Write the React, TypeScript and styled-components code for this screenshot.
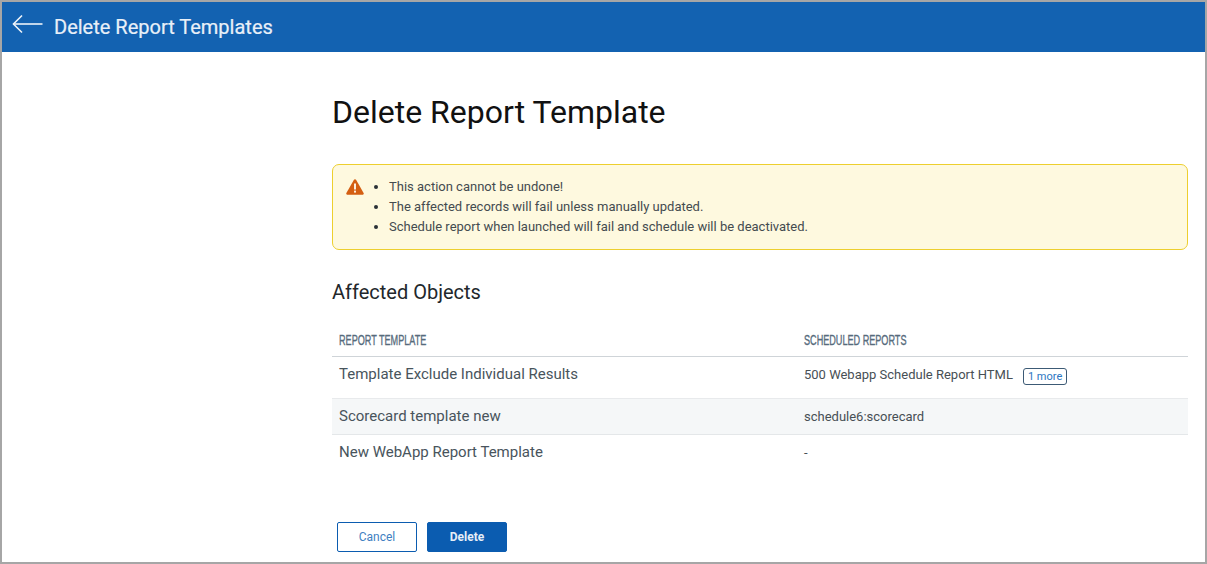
import React from "react";
import styled, { createGlobalStyle } from "styled-components";

const Global = createGlobalStyle`
  html, body { margin: 0; padding: 0; background: #fff; }
  body { font-family: Roboto, "Liberation Sans", sans-serif; overflow: hidden; }
`;
const Frame = styled.div`
  box-sizing: border-box;
  width: 1207px;
  height: 564px;
  border: 2px solid #a6a6a6;
  overflow: hidden;
  display: flex;
  flex-direction: column;
`;
const TopBar = styled.header`
  height: 50px;
  flex: none;
  background: #1362b1;
  display: flex;
  align-items: center;
  padding-left: 10px;
  gap: 11px;
  color: #e9f0f8;
`;
const BackIcon = styled.svg`
  width: 31px;
  height: 20px;
  margin-top: -6px;
`;
const BarTitle = styled.h1`
  margin: 0;
  font-size: 20px;
  font-weight: 400;
  line-height: 50px;
  -webkit-text-stroke: 0.2px #e9f0f8;
`;
const Main = styled.main`
  flex: 1;
  padding: 0 17px 0 330px;
  display: flex;
  flex-direction: column;
`;
const Title = styled.h2`
  margin: 41px 0 0;
  font-size: 32px;
  font-weight: 400;
  line-height: 38px;
  color: #111;
`;
const Alert = styled.div`
  box-sizing: border-box;
  margin-top: 33px;
  height: 86px;
  border: 1px solid #edcf2e;
  border-radius: 7px;
  background: #fef9df;
  padding: 12px 0 0 13px;
  display: flex;
`;
const WarnIcon = styled.svg`
  width: 18px;
  height: 16px;
  flex: none;
  margin-top: 2px;
`;
const AlertList = styled.ul`
  margin: 0;
  padding: 0 0 0 25px;
  font-size: 13px;
  line-height: 20px;
  color: #444b4f;
  li::marker { color: #2a3137; }
`;
const Subtitle = styled.h3`
  margin: 29px 0 0;
  font-size: 20px;
  font-weight: 400;
  line-height: 26px;
  color: #22272b;
`;
const Table = styled.div`
  margin-top: 19px;
  display: flex;
  flex-direction: column;
`;
const Row = styled.div<{ $h: number; $shade?: boolean; $line: string }>`
  box-sizing: border-box;
  height: ${(p) => p.$h}px;
  display: grid;
  grid-template-columns: 465px 1fr;
  padding-left: 7px;
  background: ${(p) => (p.$shade ? "#f5f7f8" : "#fff")};
  border-bottom: 1px solid ${(p) => p.$line};
`;
const HeadCell = styled.div`
  font-family: "Liberation Sans", sans-serif;
  font-size: 14px;
  line-height: 32px;
  color: #566b7c;
  text-transform: uppercase;
  transform: scaleX(0.65);
  transform-origin: left center;
  white-space: nowrap;
  -webkit-text-stroke: 0.35px #566b7c;
`;
const NameCell = styled.div<{ $top: number }>`
  font-size: 15px;
  line-height: 18px;
  padding-top: ${(p) => p.$top}px;
  color: #48545c;
`;
const ValueCell = styled.div<{ $top: number }>`
  font-size: 13px;
  line-height: 18px;
  padding-top: ${(p) => p.$top}px;
  color: #474f55;
  display: flex;
  align-items: flex-start;
`;
const MoreTag = styled.span`
  box-sizing: border-box;
  height: 17px;
  margin: 2px 0 0 10px;
  padding: 0 4px;
  border: 1px solid #3c5a75;
  border-radius: 3px;
  font-size: 11px;
  line-height: 15px;
  color: #2b76c2;
`;
const Actions = styled.div`
  margin: 51px 0 0 5px;
  display: flex;
  gap: 10px;
`;
const Button = styled.button<{ $primary?: boolean }>`
  box-sizing: border-box;
  width: 80px;
  height: 30px;
  padding: 0;
  border: 1px solid #0b5cb0;
  border-radius: 2px;
  background: ${(p) => (p.$primary ? "#0b5cb0" : "#fff")};
  color: ${(p) => (p.$primary ? "#e6eef7" : "#3f7fc2")};
  font-family: Roboto, sans-serif;
  font-size: 12px;
  font-weight: ${(p) => (p.$primary ? 700 : 400)};
`;

const rows = [
  { name: "Template Exclude Individual Results", value: "500 Webapp Schedule Report HTML", h: 42, more: true, line: "#e8eaec" },
  { name: "Scorecard template new", value: "schedule6:scorecard", h: 36, shade: true, line: "#e4e7e9" },
  { name: "New WebApp Report Template", value: "-", h: 36, line: "transparent" },
];

export default function App() {
  return (
    <Frame>
      <Global />
      <TopBar>
        <BackIcon viewBox="0 0 31 20" fill="none" stroke="#eef3f9" strokeWidth="1.6">
          <path d="M1.5 10H30.5" />
          <path d="M10 1.5L1.5 10L10 18.5" />
        </BackIcon>
        <BarTitle>Delete Report Templates</BarTitle>
      </TopBar>
      <Main>
        <Title>Delete Report Template</Title>
        <Alert>
          <WarnIcon viewBox="0 0 18 16">
            <path d="M9 0.3c.5 0 .9.3 1.2.8l7.4 12.8c.5.9-.1 1.9-1.1 1.9H1.5c-1 0-1.6-1-1.1-1.9L7.8 1.1C8.1.6 8.5.3 9 .3z" fill="#d45f12" />
            <rect x="8" y="4.5" width="2" height="6" fill="#fbeedd" />
            <rect x="8" y="11.6" width="2" height="2" fill="#fbeedd" />
          </WarnIcon>
          <AlertList>
            <li>This action cannot be undone!</li>
            <li>The affected records will fail unless manually updated.</li>
            <li>Schedule report when launched will fail and schedule will be deactivated.</li>
          </AlertList>
        </Alert>
        <Subtitle>Affected Objects</Subtitle>
        <Table>
          <Row $h={33} $line="#cfd4d8">
            <HeadCell>Report Template</HeadCell>
            <HeadCell>Scheduled Reports</HeadCell>
          </Row>
          {rows.map((r) => (
            <Row key={r.name} $h={r.h} $shade={r.shade} $line={r.line}>
              <NameCell $top={8}>{r.name}</NameCell>
              <ValueCell $top={9}>
                {r.value}
                {r.more && <MoreTag>1 more</MoreTag>}
              </ValueCell>
            </Row>
          ))}
        </Table>
        <Actions>
          <Button>Cancel</Button>
          <Button $primary>Delete</Button>
        </Actions>
      </Main>
    </Frame>
  );
}
